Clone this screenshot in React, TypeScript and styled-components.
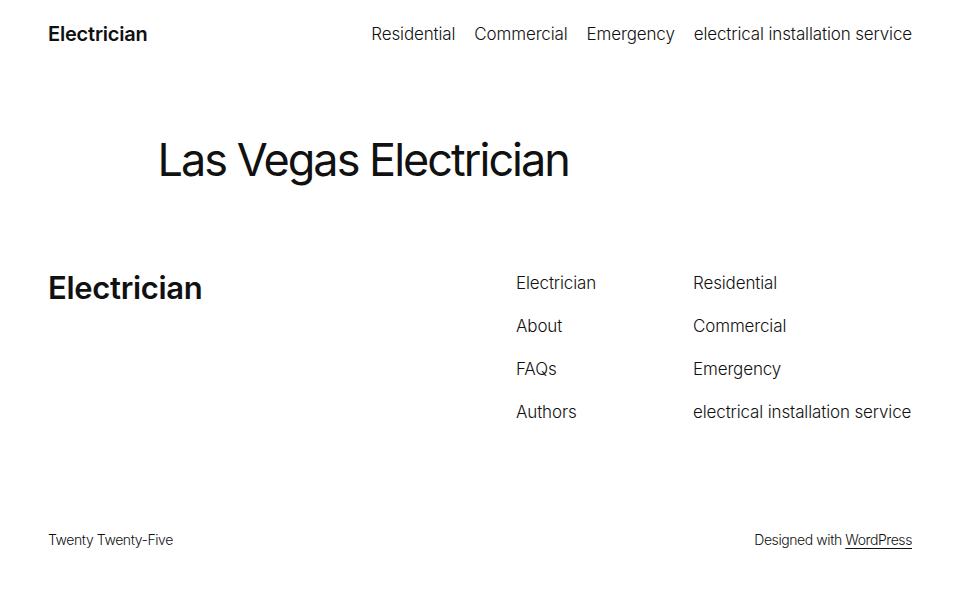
import styled, { createGlobalStyle } from 'styled-components';

const Global = createGlobalStyle`
  html, body { margin: 0; padding: 0; background: #fff; }
  body {
    font-family: Inter, "Noto Sans", sans-serif;
    color: #111111;
    -webkit-font-smoothing: antialiased;
  }
  a { color: inherit; text-decoration: none; }
`;

const Page = styled.div`
  width: 960px;
  height: 600px;
  display: flex;
  flex-direction: column;
  overflow: hidden;
`;

const Header = styled.header`
  height: 68px;
  padding: 0 48px;
  display: flex;
  align-items: center;
  justify-content: space-between;
`;

const SiteTitle = styled.a<{ $size: number }>`
  font-size: ${(p) => p.$size}px;
  font-weight: 600;
  letter-spacing: -0.01em;
  line-height: 1;
`;

const Nav = styled.nav`
  display: flex;
  gap: 19px;
`;

const NavItem = styled.a`
  font-size: 17px;
  font-weight: 300;
  letter-spacing: -0.008em;
  white-space: nowrap;
`;

const Main = styled.main`
  width: 645px;
  margin: 0 auto;
  padding-top: 65px;
  height: 198px;
  box-sizing: border-box;
`;

const Title = styled.h1`
  margin: 0;
  font-size: 45px;
  font-weight: 400;
  letter-spacing: -0.044em;
  line-height: 1.2;
`;

const Footer = styled.footer`
  padding: 0 48px;
  display: flex;
  justify-content: space-between;
  align-items: flex-start;
  height: 265px;
  padding-top: 6px;
  box-sizing: border-box;
`;

const Columns = styled.div`
  display: flex;
`;

const Column = styled.ul<{ $width: number }>`
  list-style: none;
  margin: 0;
  padding: 0;
  width: ${(p) => p.$width}px;
  display: flex;
  flex-direction: column;
  gap: 20px;
`;

const ColumnItem = styled.li`
  font-size: 17px;
  font-weight: 300;
  letter-spacing: -0.008em;
  line-height: 23px;
  white-space: nowrap;
`;

const Bottom = styled.div`
  padding: 0 48px;
  display: flex;
  justify-content: space-between;
  font-size: 14px;
  font-weight: 300;
  letter-spacing: -0.03em;
`;

const Credit = styled.a`
  text-decoration: underline;
  text-underline-offset: 3px;
`;

const headerLinks = ['Residential', 'Commercial', 'Emergency', 'electrical installation service'];
const pageLinks = ['Electrician', 'About', 'FAQs', 'Authors'];

export default function App() {
  return (
    <>
      <Global />
      <Page>
        <Header>
          <SiteTitle $size={20}>Electrician</SiteTitle>
          <Nav>
            {headerLinks.map((l) => (
              <NavItem key={l}>{l}</NavItem>
            ))}
          </Nav>
        </Header>
        <Main>
          <Title>Las Vegas Electrician</Title>
        </Main>
        <Footer>
          <SiteTitle $size={31}>Electrician</SiteTitle>
          <Columns>
            <Column $width={177}>
              {pageLinks.map((l) => (
                <ColumnItem key={l}>{l}</ColumnItem>
              ))}
            </Column>
            <Column $width={219}>
              {headerLinks.map((l) => (
                <ColumnItem key={l}>{l}</ColumnItem>
              ))}
            </Column>
          </Columns>
        </Footer>
        <Bottom>
          <span>Twenty Twenty-Five</span>
          <span>
            Designed with <Credit>WordPress</Credit>
          </span>
        </Bottom>
      </Page>
    </>
  );
}
